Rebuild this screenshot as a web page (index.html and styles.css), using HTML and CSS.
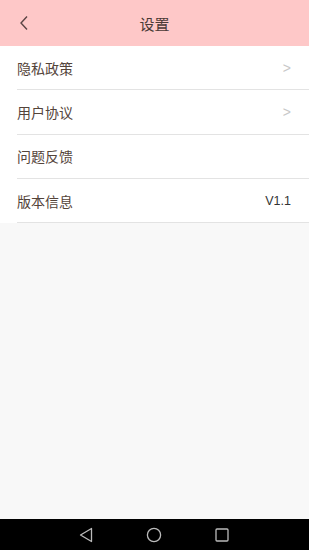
FILE: index.html
```html
<!DOCTYPE html>
<html lang="zh">
<head>
<meta charset="utf-8">
<link rel="stylesheet" href="styles.css">
</head>
<body>
<div class="screen">
  <header class="topbar">
    <span class="back">
      <svg width="10" height="16" viewBox="0 0 10 16"><path d="M8 1.5 L2 8 L8 14.5" fill="none" stroke="#5a4444" stroke-width="1.4"/></svg>
    </span>
    <span class="title">设置</span>
  </header>
  <ul class="list">
    <li class="row"><span class="label">隐私政策</span><span class="chev">&gt;</span></li>
    <li class="row"><span class="label">用户协议</span><span class="chev">&gt;</span></li>
    <li class="row"><span class="label">问题反馈</span></li>
    <li class="row"><span class="label">版本信息</span><span class="ver">V1.1</span></li>
  </ul>
  <div class="fill"></div>
  <nav class="navbar">
    <svg width="14" height="16" viewBox="0 0 14 16"><path d="M12.5 1.5 L1.5 8 L12.5 14.5 Z" fill="none" stroke="#bbb" stroke-width="1.3" stroke-linejoin="round"/></svg>
    <svg width="16" height="16" viewBox="0 0 16 16"><circle cx="8" cy="8" r="6.6" fill="none" stroke="#bbb" stroke-width="1.3"/></svg>
    <svg width="14" height="14" viewBox="0 0 14 14"><rect x="1" y="1" width="12" height="12" rx="1" fill="none" stroke="#bbb" stroke-width="1.3"/></svg>
  </nav>
</div>
</body>
</html>
```
FILE: styles.css
```css
html, body { margin: 0; padding: 0; }
body { font-family: "Noto Sans CJK SC", "Noto Sans", sans-serif; }
.screen { width: 309px; height: 550px; display: flex; flex-direction: column; background: #f8f8f8; }
.topbar { height: 46px; background: #fec8c8; display: flex; align-items: center; justify-content: center; position: relative; flex-shrink: 0; }
.back { position: absolute; left: 19px; top: 15px; width: 10px; height: 16px; display: flex; }
.title { font-size: 15px; color: #4a3a36; }
.list { list-style: none; margin: 0; padding: 0 0 0 17px; background: #fff; }
.row { height: 43.3px; display: flex; align-items: center; justify-content: space-between; border-bottom: 1px solid #e3e3e3; padding-right: 18px; }
.label { font-size: 14px; color: #54443a; }
.chev { font-family: "Liberation Sans", sans-serif; font-size: 14px; color: #c8c8c8; }
.ver { font-family: "Liberation Sans", sans-serif; font-size: 12.5px; color: #333; }
.fill { flex: 1; }
.navbar { height: 31px; background: #000; display: flex; align-items: center; justify-content: center; gap: 53px; flex-shrink: 0; padding-right: 2px; }
```
